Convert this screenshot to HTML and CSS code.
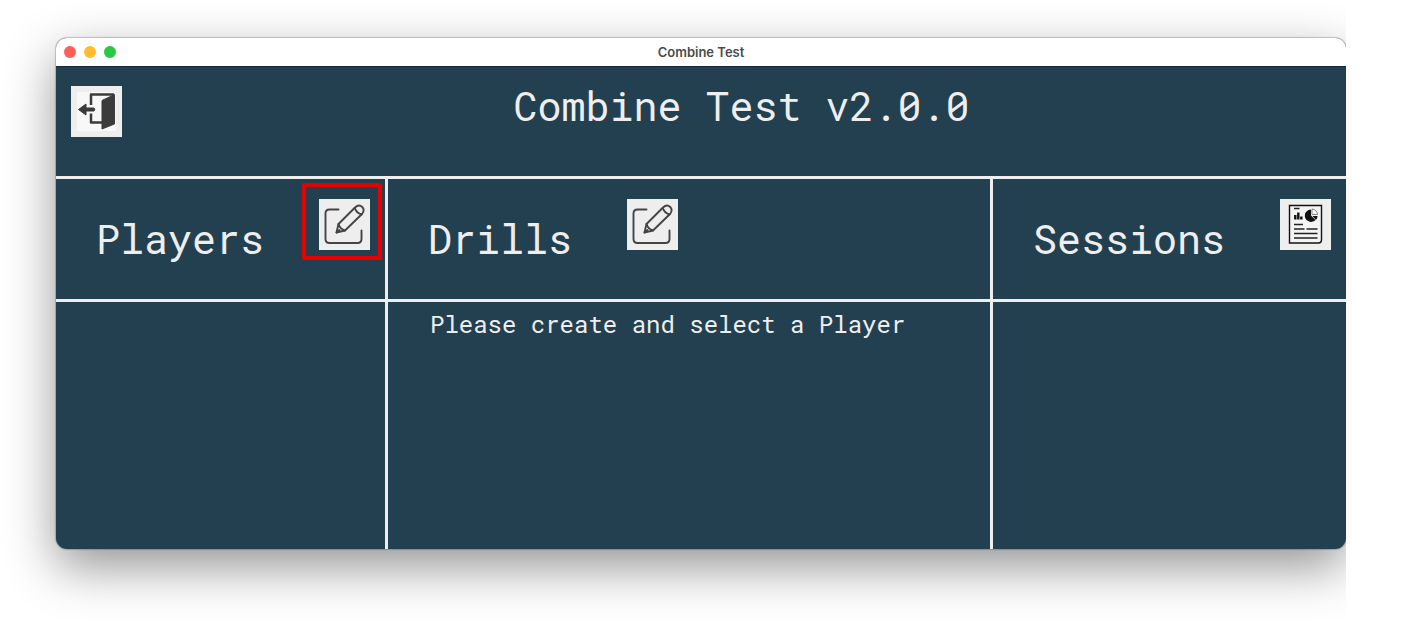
FILE: index.html
```html
<!DOCTYPE html>
<html lang="en">
<head>
<meta charset="utf-8">
<title>Combine Test</title>
<link rel="stylesheet" href="styles.css">
</head>
<body>
<svg width="0" height="0" class="defs" aria-hidden="true">
  <symbol id="edit" viewBox="0 0 51 51">
    <g fill="none" stroke="#444" stroke-width="1.900" stroke-linecap="round" stroke-linejoin="round">
      <path d="M19.500 10.500H10.500q-4 0-4 4V40q0 4 4 4h28q4 0 4-4V31.500"/>
      <path d="M17.500 33.500 19.500 25 36 8.500q4-3.500 7.200-.5 3 3.200-.2 7L26 31.500z"/>
      <path d="M19.500 25q1.500 5 6.500 6.500M36 9.500q1.500 4.500 6.500 6M17.500 33.500l3-2.500"/>
    </g>
  </symbol>
</svg>
<div class="stage">
  <main class="window">
    <div class="titlebar">
      <div class="lights"><span class="light red"></span><span class="light amber"></span><span class="light green"></span></div>
      <span class="caption">Combine Test</span>
    </div>
    <header class="header">
      <button class="icon-button" aria-label="Exit">
        <svg viewBox="0 0 51 51">
          <path fill="#f8f8f8" d="M6 6h39v39H6z"/>
          <path fill="none" stroke="#3b3b3b" stroke-width="2.500" stroke-linejoin="round" d="M20 19V8.500h23M20 27.500v9h11"/>
          <path fill="#3b3b3b" stroke="#3b3b3b" stroke-linejoin="round" d="m31 14.500 12.500-6v29.500L31 43zM7.500 23.500l7.500-5.500v4h8q1.500 1.500 0 3h-8v4z"/>
        </svg>
      </button>
      <h1 class="title">Combine Test v2.0.0</h1>
    </header>
    <div class="columns">
      <section class="column">
        <div class="column-head">
          <h2 class="heading">Players</h2>
          <button class="icon-button highlighted" aria-label="Edit players"><svg><use href="#edit"/></svg></button>
        </div>
      </section>
      <section class="column">
        <div class="column-head">
          <h2 class="heading">Drills</h2>
          <button class="icon-button" aria-label="Edit drills"><svg><use href="#edit"/></svg></button>
        </div>
        <p class="message">Please create and select a Player</p>
      </section>
      <section class="column">
        <div class="column-head">
          <h2 class="heading">Sessions</h2>
          <button class="icon-button" aria-label="Session report">
            <svg viewBox="0 0 51 51">
              <path fill="#f4f4f4" stroke="#111" stroke-width="1.400" d="M9.500 6.500h32V41q0 3-3 3h-29z"/>
              <path stroke="#222" stroke-width="1.600" fill="none" d="M14 9.500h5.500M14 25.500h9M14 30h10.500m2 0H37.500M14 34.500h23.500M14 39h23.500"/>
              <path stroke="#111" stroke-width="2.400" fill="none" d="M15.300 16v4.500M18.300 13.500v7M21.300 17.500v3"/>
              <path fill="#111" d="M31 10.500v6l4.500 4.500a6.200 6.200 0 1 1-4.500-10.500z"/>
              <path fill="#111" d="M32.500 17h5q0 2.500-1.500 4z"/>
              <path fill="#fff" stroke="#555" stroke-width=".7" d="M32 10q5 .5 5.500 5.500H32z"/>
            </svg>
          </button>
        </div>
      </section>
    </div>
  </main>
</div>
</body>
</html>
```
FILE: styles.css
```css
* { box-sizing: border-box; }

body {
  margin: 0;
  background: #fff;
  color: #eee;
  font-family: "Roboto Mono", "DejaVu Sans Mono", monospace;
}

.defs { position: absolute; }

.stage {
  min-height: 100vh;
  margin-right: 56px;
  padding: 38px 0 74px 56px;
  overflow: hidden;
}

.window {
  display: flex;
  flex-direction: column;
  min-height: calc(100vh - 112px);
  border-radius: 11px;
  overflow: hidden;
  background: #234050;
  box-shadow: 0 0 1px 1px rgba(0, 0, 0, .2), 0 18px 50px rgba(0, 0, 0, .42);
}

.titlebar {
  display: grid;
  grid-template-columns: 1fr auto 1fr;
  align-items: center;
  height: 29px;
  padding: 0 8px;
  background: #fff;
  border-bottom: 1px solid #14293a;
}

.lights { display: flex; gap: 8px; }

.light {
  width: 12px;
  height: 12px;
  border-radius: 50%;
}

.red { background: #ff5f57; }
.amber { background: #febc2e; }
.green { background: #28c840; }

.caption {
  color: #4b4b4b;
  font-family: "Inter", "Liberation Sans", sans-serif;
  font-size: 13px;
  font-weight: 600;
  line-height: 16px;
}

.header {
  display: flex;
  align-items: flex-start;
  gap: 15px;
  min-height: 112px;
  padding: 19px 0 0 15px;
  border-bottom: 3px solid #eee;
}

.title,
.heading {
  margin: 0;
  font-size: 40px;
  line-height: 40px;
  font-weight: 400;
}

.title { flex: 1; text-align: center; }

.icon-button {
  flex: none;
  width: 51px;
  height: 51px;
  padding: 0;
  border: 0;
  background: #eee;
  cursor: pointer;
}

.icon-button svg {
  display: block;
  width: 100%;
  height: 100%;
}

.highlighted { position: relative; }

.highlighted::after {
  content: "";
  position: absolute;
  inset: -16px -12px -10px -17px;
  border: 4px solid #e60000;
  border-radius: 2px;
}

.columns {
  flex: 1;
  display: grid;
  grid-template-columns: 329fr 605fr 356fr;
}

.column + .column { border-left: 3px solid #eee; }

.column-head {
  display: flex;
  align-items: flex-start;
  gap: 55px;
  height: 123px;
  padding: 20px 0 0 40px;
  border-bottom: 3px solid #eee;
}

.heading { padding-top: 20px; }

.message {
  margin: 0;
  padding: 8px 42px;
  font-size: 24px;
  line-height: 28px;
}
```
